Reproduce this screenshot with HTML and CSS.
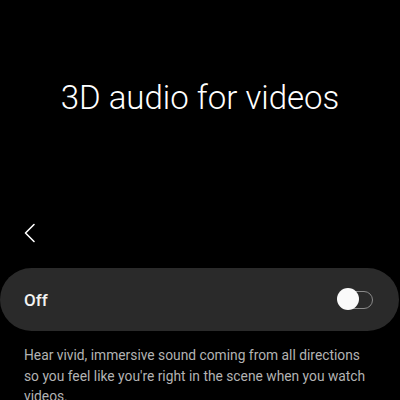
FILE: index.html
```html
<!DOCTYPE html>
<html lang="en">
<head>
    <meta charset="UTF-8">
    <meta name="viewport" content="width=device-width, initial-scale=1.0">
    <title>3D audio for videos</title>
    <link rel="stylesheet" href="styles.css">
</head>
<body>
    <header class="hero">
        <h1 class="title">3D audio for videos</h1>
    </header>

    <nav class="toolbar">
        <button type="button" class="back" aria-label="Back">
            <svg width="12" height="20" viewBox="0 0 12 20">
                <polyline points="10,1.5 1.5,10 10,18.5" fill="none" stroke="#fff" stroke-width="1.6" stroke-linecap="round" stroke-linejoin="round"/>
            </svg>
        </button>
    </nav>

    <section class="switch-card">
        <span class="switch-label">Off</span>
        <span class="switch" role="switch" aria-checked="false">
            <span class="switch-thumb"></span>
        </span>
    </section>

    <p class="description">Hear vivid, immersive sound coming from all directions so you feel like you're right in the scene when you watch videos.</p>
</body>
</html>
```

FILE: styles.css
```css
body {
    margin: 0;
    background-color: #000;
    color: #fff;
    font-family: Roboto, "Noto Sans", sans-serif;
    width: 400px;
    overflow: hidden;
}
.hero {
    height: 200px;
    display: flex;
    justify-content: center;
    padding-top: 76px;
    box-sizing: border-box;
}
.title {
    margin: 0;
    font-size: 33px;
    font-weight: 300;
    line-height: 44px;
    height: 44px;
}
.toolbar {
    height: 66px;
    display: flex;
    align-items: center;
    padding-left: 18px;
}
.back {
    background: none;
    border: none;
    padding: 4px 6px;
    display: flex;
    cursor: pointer;
}
.switch-card {
    width: 399px;
    height: 63px;
    box-sizing: border-box;
    margin-top: 2px;
    background-color: #2a2a2a;
    border-radius: 32px;
    display: flex;
    align-items: center;
    justify-content: space-between;
    padding: 0 26px 0 24px;
}
.switch-label {
    font-size: 17px;
    font-weight: 500;
    color: #f2f2f2;
}
.switch {
    position: relative;
    width: 35px;
    height: 18px;
    box-sizing: border-box;
    border: 1.5px solid #8a8a8a;
    border-radius: 9px;
}
.switch-thumb {
    position: absolute;
    left: -2.5px;
    top: -3.5px;
    width: 22px;
    height: 22px;
    border-radius: 50%;
    background-color: #fafafa;
}
.description {
    margin: 14px 0 0;
    padding: 0 26px 0 24px;
    font-size: 13.8px;
    line-height: 20.5px;
    color: #b3b3b3;
}
```
